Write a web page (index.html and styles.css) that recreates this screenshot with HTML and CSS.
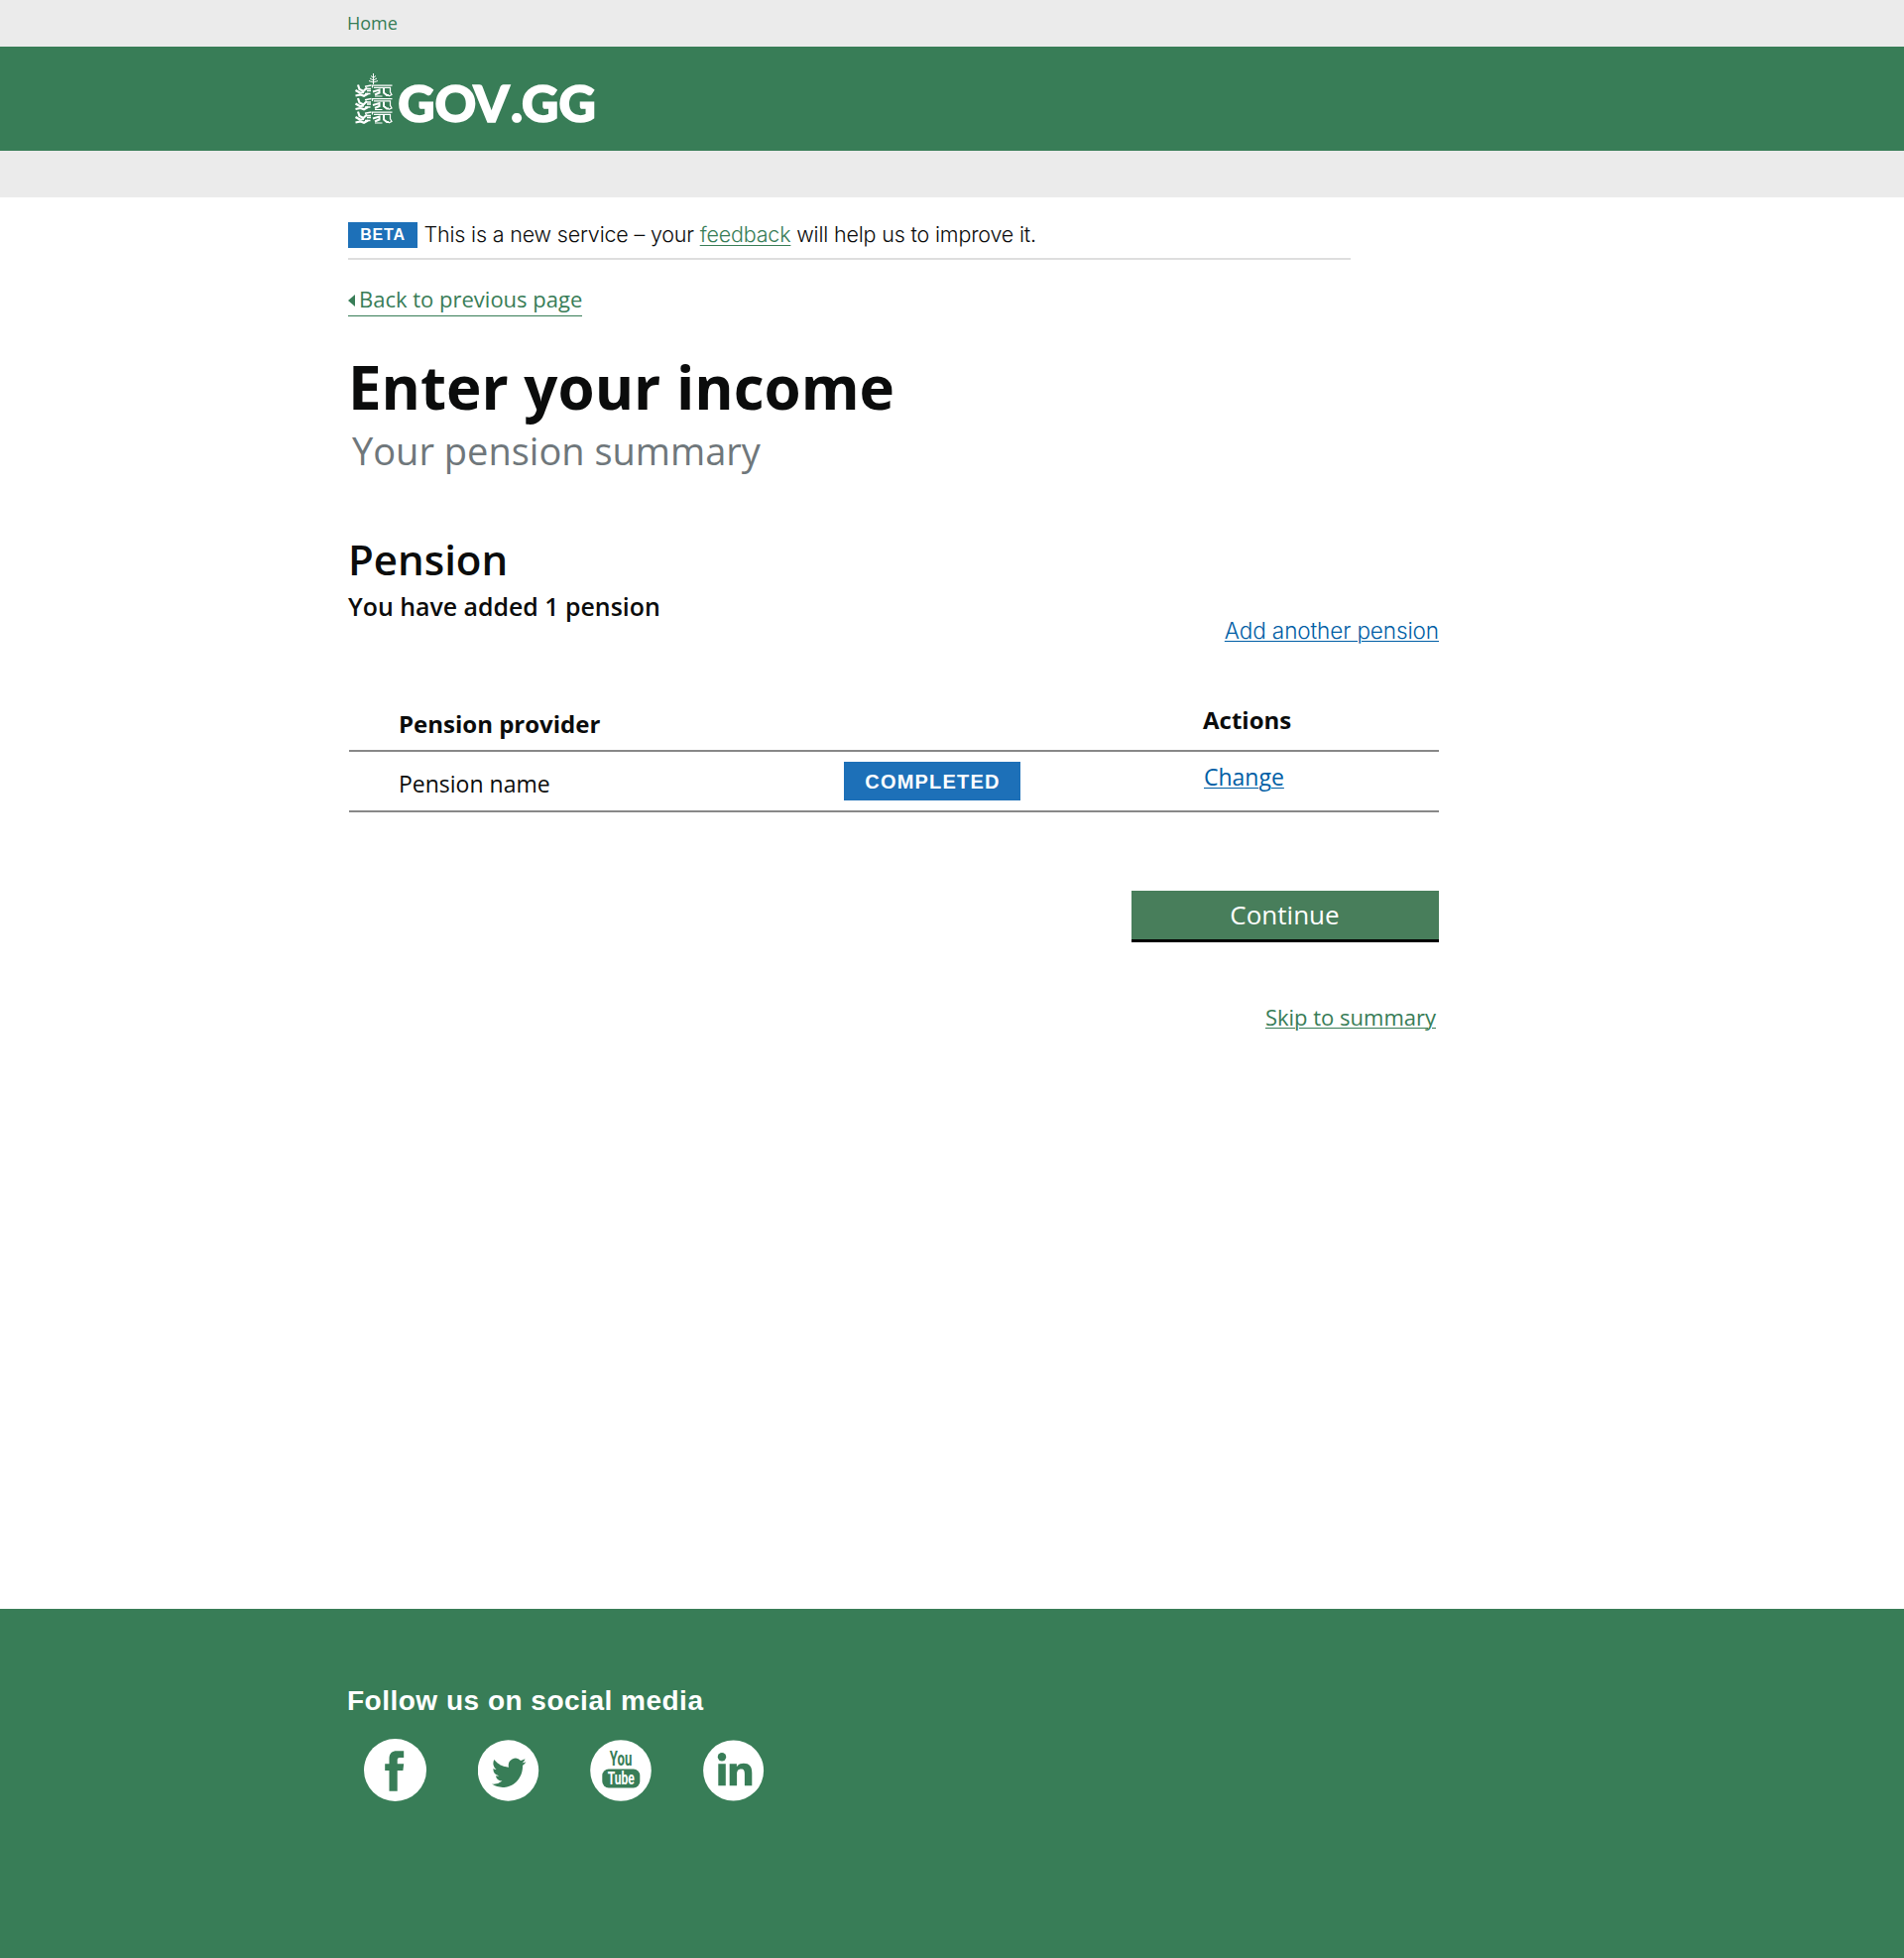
FILE: index.html
```html
<!DOCTYPE html>
<html lang="en">
<head>
<meta charset="utf-8">
<title>Enter your income - GOV.GG</title>
<link rel="stylesheet" href="styles.css">
</head>
<body>
<nav class="topbar"><a href="#">Home</a></nav>
<header class="masthead">
  <svg class="logo" width="250" height="70" viewBox="0 -5 250 70" role="img" aria-label="GOV.GG">
    <defs>
      <g id="lion" fill="none" stroke="#fff">
        <path d="M3 .5 4.500 5 8.500 7 12 3.500M.5 6 5 8.500 9 8M.5 11.500 5.500 10.500 9 11.800 13 9.500" stroke-width="2.200"/>
        <path d="M10 2.200 16.500 1M11 4.500h5M12 6.500h4M10 9.500h5.500" stroke-width="1.400"/>
        <path d="M17.500 3.500V1.200H37.500M19 3.300h16.500v4.500l1.500 2.700-3 1.400M20 12h7.500" stroke-width="1.200"/>
        <path d="M18 7.500 24.500 5.500v3l-4.500 2M29 4v4.500l3 2.500h2" stroke-width="2"/>
      </g>
    </defs>
    <g fill="none" stroke="#fff" stroke-width="1">
      <path d="M18.500 0v11M16 2.500l2.500 2 2.500-2M15 5l3.500 2L22 5M14 7.500l4.500 1.500L23 7.500"/>
    </g>
    <use href="#lion" y="11"/><use href="#lion" y="24.500"/><use href="#lion" y="38"/>
    <text class="wordmark" y="48.700" x="43.300 80.500 119.500 157 168 205.500">GOV.GG</text>
  </svg>
</header>
<div class="subbar"></div>
<main class="page">
  <div class="phase"><strong class="tag">BETA</strong><span class="phase-text">This is a new service – your <a href="#">feedback</a> will help us to improve it.</span></div>
  <a class="back" href="#"><svg width="8" height="12" viewBox="0 0 8 12"><path d="M0 6 7 0V12Z" fill="#387d57"/></svg><span>Back to previous page</span></a>
  <h1>Enter your income</h1>
  <p class="caption">Your pension summary</p>
  <h2>Pension</h2>
  <p class="count">You have added 1 pension</p>
  <a class="add" href="#">Add another pension</a>
  <section class="table">
    <div class="row head"><span>Pension provider</span><span></span><span class="actions">Actions</span></div>
    <div class="row item"><span>Pension name</span><strong class="status">COMPLETED</strong><a class="change" href="#">Change</a></div>
  </section>
  <button class="continue">Continue</button>
  <a class="skip" href="#">Skip to summary</a>
</main>
<footer class="footer">
  <h3>Follow us on social media</h3>
  <div class="social">
    <svg width="63" height="63" viewBox="0 0 63 63"><circle cx="31.500" cy="31.500" r="31.500" fill="#fff"/><path d="M25.500 52.800V32H21.200V25.200h4.300V20c0-5.500 3-7.800 7.500-7.800h7.200v6.800h-4.200c-1.800 0-2.300.9-2.300 2.500v3.700h6.500l-.8 6.800h-5.700v20.800Z" fill="#387d57"/></svg>
    <svg width="62" height="62" viewBox="0 0 62 62"><circle cx="30.500" cy="31" r="30.700" fill="#fff"/><path transform="translate(14 15.300) scale(1.440 1.500)" d="M23.950 4.570a10 10 0 0 1-2.820.770 4.960 4.960 0 0 0 2.160-2.720c-.95.550-2 .950-3.130 1.180a4.920 4.920 0 0 0-8.380 4.480C7.690 8.100 4.070 6.130 1.640 3.160a4.920 4.920 0 0 0 1.520 6.570 4.900 4.900 0 0 1-2.230-.610v.060a4.920 4.920 0 0 0 3.950 4.830 5 5 0 0 1-2.210.080 4.940 4.940 0 0 0 4.600 3.420A9.870 9.870 0 0 1 0 19.540a14 14 0 0 0 7.550 2.210c9.050 0 14-7.500 14-13.980 0-.210 0-.420-.020-.630a9.940 9.940 0 0 0 2.420-2.570Z" fill="#387d57"/></svg>
    <svg width="62" height="62" viewBox="0 0 62 62"><circle cx="31" cy="31" r="30.800" fill="#fff"/><rect x="12.300" y="29.500" width="38" height="19" rx="6.500" fill="#387d57"/><text class="yt yt-you" x="19.800" y="26.300" textLength="22.500" lengthAdjust="spacingAndGlyphs">You</text><text class="yt yt-tube" x="17.800" y="45" textLength="27" lengthAdjust="spacingAndGlyphs">Tube</text></svg>
    <svg width="62" height="62" viewBox="0 0 62 62"><circle cx="30.600" cy="31" r="30.500" fill="#fff"/><g fill="#387d57" transform="translate(-.5 0)"><circle cx="19.500" cy="17.200" r="4.200"/><path d="M15.800 24.300h7.500v22h-7.500ZM27.200 24.300h7.200v3c1.200-2.200 3.700-3.600 7-3.600 6.300 0 8.400 4 8.400 9.800v12.800h-7.400V34.500c0-2.900-.5-5-3.600-5-3.200 0-4.200 2.200-4.200 5v11.800h-7.400Z"/></g></svg>
  </div>
</footer>
</body>
</html>
```
FILE: styles.css
```css
* { box-sizing: border-box; }
body {
  margin: 0;
  background: #fff;
  color: #0b0c0c;
  font-family: "Open Sans", "Noto Sans", sans-serif;
}
h1, h2, h3, p { margin: 0; }
.topbar {
  height: 47px;
  padding-left: 350px;
  background: #ebebeb;
  font-size: 18px;
  line-height: 46px;
}
.topbar a { color: #387d57; text-decoration: none; }
.masthead { height: 105px; padding: 22px 0 0 358px; background: #387d57; }
.logo { display: block; overflow: visible; }
.wordmark { font: 900 51.500px Lato, sans-serif; fill: #fff; stroke: #fff; stroke-width: 1.600; }
.subbar { height: 47px; background: #ebebeb; }
.page {
  display: flex;
  flex-direction: column;
  align-items: flex-start;
  width: 1100px;
  height: 1423px;
  margin-left: 351px;
}
.phase {
  display: flex;
  align-items: center;
  gap: 6.500px;
  width: 1011px;
  height: 63px;
  padding-top: 14px;
  border-bottom: 2px solid #dedede;
}
.tag {
  width: 70px;
  height: 26px;
  background: #1d70b8;
  color: #fff;
  font: bold 16px/26px "Liberation Sans", sans-serif;
  letter-spacing: .8px;
  text-align: center;
}
.phase-text { margin-bottom: 2px; font: 300 21.500px/26px Inter, sans-serif; letter-spacing: -.180px; }
.phase-text a { color: #387d57; text-underline-offset: 3px; text-decoration-thickness: 1px; }
.back {
  display: flex;
  align-items: center;
  gap: 3px;
  height: 35px;
  margin-top: 22px;
  border-bottom: 1px solid #387d57;
  color: #387d57;
  font-size: 22px;
  line-height: 35px;
  text-decoration: none;
}
.back svg { margin-top: 3px; }
h1 { margin-top: 31px; font-size: 60px; font-weight: 700; line-height: 80px; margin-bottom: 4px; }
.caption { padding-left: 4px; color: #6f777b; font-size: 38px; line-height: 40px; }
h2 { margin-top: 66px; font-size: 42px; font-weight: 600; line-height: 48px; }
.count { margin-top: 5px; font-size: 24.900px; font-weight: 600; line-height: 36px; }
.add {
  align-self: flex-end;
  margin-top: -8px;
  color: #005ea5;
  font: 300 22.500px/30px Inter, sans-serif;
  letter-spacing: -.100px;
  text-underline-offset: 2px;
  text-decoration-thickness: 1px;
}
.table { width: 1099px; margin: 62px 0 0 1px; }
.row {
  display: grid;
  grid-template-columns: 449px 362px 1fr;
  padding-left: 50px;
  border-bottom: 2px solid #888;
}
.head { height: 45px; font-size: 24px; font-weight: 700; line-height: 34px; }
.actions { margin-top: -4px; }
.item { height: 61px; font-size: 23px; line-height: 65px; }
.status {
  width: 178px;
  height: 39px;
  margin-top: 10px;
  padding-left: 1px;
  background: #1d70b8;
  color: #fff;
  font: bold 20px/40px "Liberation Sans", sans-serif;
  letter-spacing: 1.200px;
  text-align: center;
}
.change {
  justify-self: start;
  margin-left: 1px;
  color: #005ea5;
  line-height: 51px;
  text-underline-offset: 2px;
  text-decoration-thickness: 1px;
}
.continue {
  align-self: flex-end;
  width: 310px;
  height: 52px;
  margin-top: 79px;
  padding: 0 1px 0 0;
  border: 0;
  border-bottom: 3px solid #000;
  background: #487e5b;
  color: #fff;
  font: 26px/49px "Open Sans", sans-serif;
}
.skip {
  align-self: flex-end;
  margin: 59px 3px 0 0;
  color: #387d57;
  font-size: 22px;
  line-height: 32px;
  text-underline-offset: 2px;
  text-decoration-thickness: 1px;
}
.footer { height: 352px; padding: 76px 0 0 350px; background: #387d57; }
.footer h3 { color: #fff; font: bold 28px/34px "Liberation Sans", sans-serif; letter-spacing: .5px; }
.social { display: flex; align-items: center; gap: 51.600px; margin: 21px 0 0 17px; }
.yt { font-family: "Roboto", sans-serif; font-weight: 700; font-size: 20.700px; }
.yt-you { fill: #387d57; }
.yt-tube { fill: #fff; font-size: 18.500px; }
```
